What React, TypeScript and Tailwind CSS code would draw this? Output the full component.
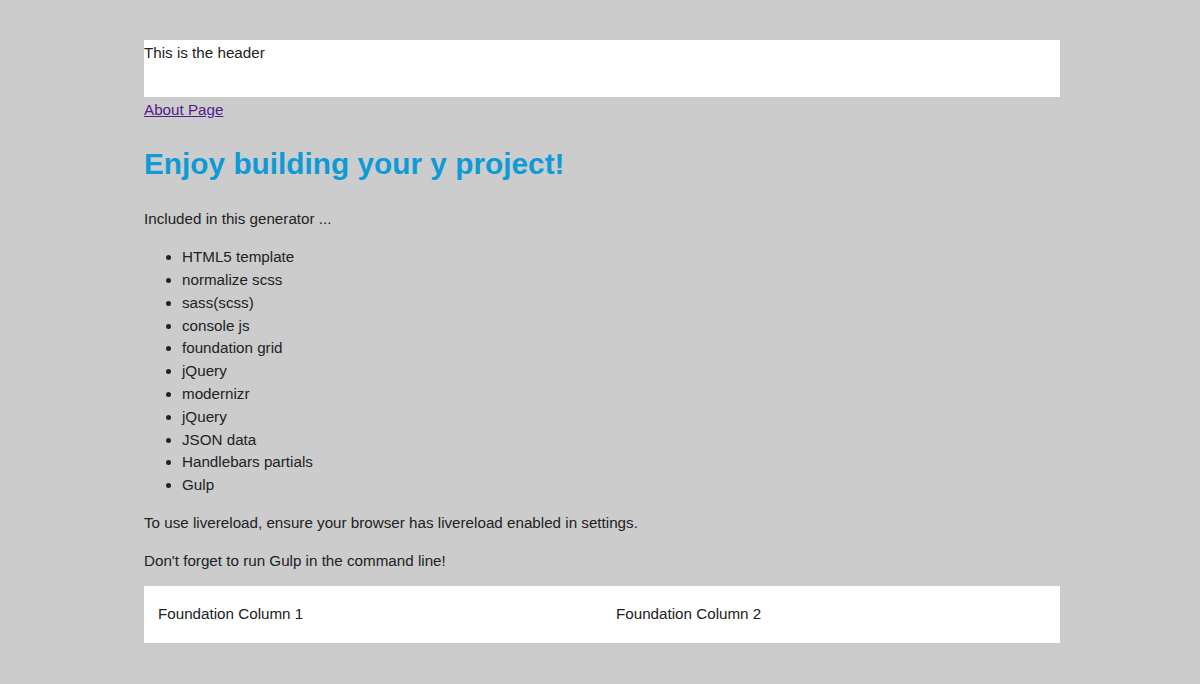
import React from "react";

const items = [
  "HTML5 template",
  "normalize scss",
  "sass(scss)",
  "console js",
  "foundation grid",
  "jQuery",
  "modernizr",
  "jQuery",
  "JSON data",
  "Handlebars partials",
  "Gulp",
];

const App: React.FC = () => {
  return (
    <div className="min-h-[684px] bg-[#cccccc] pt-[40px] font-['Liberation_Sans',Arial,sans-serif] text-[15.2px] leading-[22.8px] text-[#222222]">
      <div className="ml-[144px] w-[916px]">
        <header className="h-[57px] bg-white pt-[2px]">This is the header</header>

        <a href="#" className="mt-[2px] inline-block text-[#551a8b] underline">
          About Page
        </a>

        <h1 className="mt-[23px] mb-[25px] text-[29.8px] leading-[38.4px] font-bold text-[#0c9bd6]">
          Enjoy building your y project!
        </h1>

        <p>Included in this generator ...</p>

        <ul className="my-[15.2px] list-disc pl-[38px]">
          {items.map((item, i) => (
            <li key={i}>{item}</li>
          ))}
        </ul>

        <p>To use livereload, ensure your browser has livereload enabled in settings.</p>

        <p className="mt-[15.2px]">Don't forget to run Gulp in the command line!</p>

        <div className="mt-[12.6px] grid h-[57px] grid-cols-2 items-center bg-white">
          <div className="px-[14px]">Foundation Column 1</div>
          <div className="px-[14px]">Foundation Column 2</div>
        </div>
      </div>
    </div>
  );
};

export default App;
